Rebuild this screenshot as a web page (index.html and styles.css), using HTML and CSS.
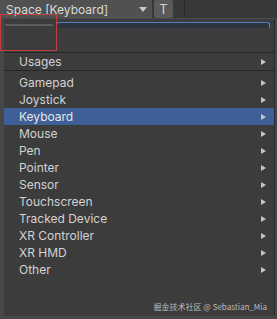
FILE: index.html
```html
<!DOCTYPE html>
<html lang="en">
<head>
    <meta charset="UTF-8">
    <title>Control Picker</title>
    <link rel="stylesheet" href="styles.css">
</head>
<body>
    <div class="toolbar">
        <div class="dropdown">
            <span>Space [Keyboard]</span>
            <span class="caret"></span>
        </div>
        <div class="tbtn">T</div>
        <div class="vline"></div>
    </div>
    <div class="popup">
        <div class="search">
            <div class="back"></div>
            <div class="field"></div>
        </div>
        <div class="sep"></div>
        <div class="item">Usages<span class="arrow"></span></div>
        <div class="sep sep-gap"></div>
        <div class="item">Gamepad<span class="arrow"></span></div>
        <div class="item">Joystick<span class="arrow"></span></div>
        <div class="item selected">Keyboard<span class="arrow"></span></div>
        <div class="item">Mouse<span class="arrow"></span></div>
        <div class="item">Pen<span class="arrow"></span></div>
        <div class="item">Pointer<span class="arrow"></span></div>
        <div class="item">Sensor<span class="arrow"></span></div>
        <div class="item">Touchscreen<span class="arrow"></span></div>
        <div class="item">Tracked Device<span class="arrow"></span></div>
        <div class="item">XR Controller<span class="arrow"></span></div>
        <div class="item">XR HMD<span class="arrow"></span></div>
        <div class="item">Other<span class="arrow"></span></div>
        <div class="watermark">掘金技术社区 @ Sebastian_Mia</div>
    </div>
    <div class="mark"></div>
</body>
</html>
```

FILE: styles.css
```css
body {
    margin: 0;
    width: 277px;
    height: 319px;
    overflow: hidden;
    background-color: #474747;
    font-family: Inter, "Noto Sans", sans-serif;
    color: #d2d2d2;
    position: relative;
}
.toolbar {
    display: flex;
    height: 18px;
    background-color: #383838;
    border-bottom: 1px solid #4a4a4a;
}
.dropdown {
    width: 146px;
    padding-left: 6px;
    display: flex;
    align-items: center;
    justify-content: space-between;
    background-color: #515151;
    font-size: 12px;
    color: #dadada;
}
.caret {
    width: 0;
    height: 0;
    margin-right: 5px;
    border-left: 4px solid transparent;
    border-right: 4px solid transparent;
    border-top: 5px solid #c8c8c8;
}
.tbtn {
    width: 19px;
    margin-left: 2px;
    background-color: #5a5a5a;
    font-size: 13px;
    text-align: center;
    line-height: 18px;
    border-radius: 2px;
}
.vline {
    width: 1px;
    margin-left: 11px;
    background-color: #2c2c2c;
}
.popup {
    margin-left: 4px;
    width: 270px;
    height: 297px;
    background-color: #3c3c3c;
    border-right: 1px solid #2a2a2a;
    position: relative;
}
.search {
    display: flex;
    height: 33px;
    padding-top: 3px;
    box-sizing: border-box;
}
.back {
    width: 48px;
    height: 2px;
    margin: 2px 0 0 1px;
    background-color: #5e5e5e;
    border-radius: 1px;
}
.field {
    width: 212px;
    height: 5px;
    margin-left: 3px;
    background-color: #2d3440;
    border: 1px solid #4f7fbe;
    border-bottom: none;
    border-radius: 3px 3px 0 0;
}
.sep {
    height: 1px;
    background-color: #262626;
}
.sep-gap {
    margin-bottom: 3px;
}
.item {
    height: 17px;
    line-height: 17px;
    padding-left: 15px;
    font-size: 12px;
    display: flex;
    justify-content: space-between;
    align-items: center;
}
.item.selected {
    background-color: #3e5f97;
    color: #e6e6e6;
}
.arrow {
    width: 0;
    height: 0;
    margin-right: 8px;
    border-top: 3px solid transparent;
    border-bottom: 3px solid transparent;
    border-left: 5px solid #c4c4c4;
}
.watermark {
    position: absolute;
    right: 7px;
    bottom: 4px;
    font-size: 8px;
    color: #bdbdbd;
    font-family: "Noto Sans CJK SC", sans-serif;
}
.mark {
    position: absolute;
    left: 0;
    top: 14px;
    width: 55px;
    height: 35px;
    border: 1px solid #c0403e;
}
```
